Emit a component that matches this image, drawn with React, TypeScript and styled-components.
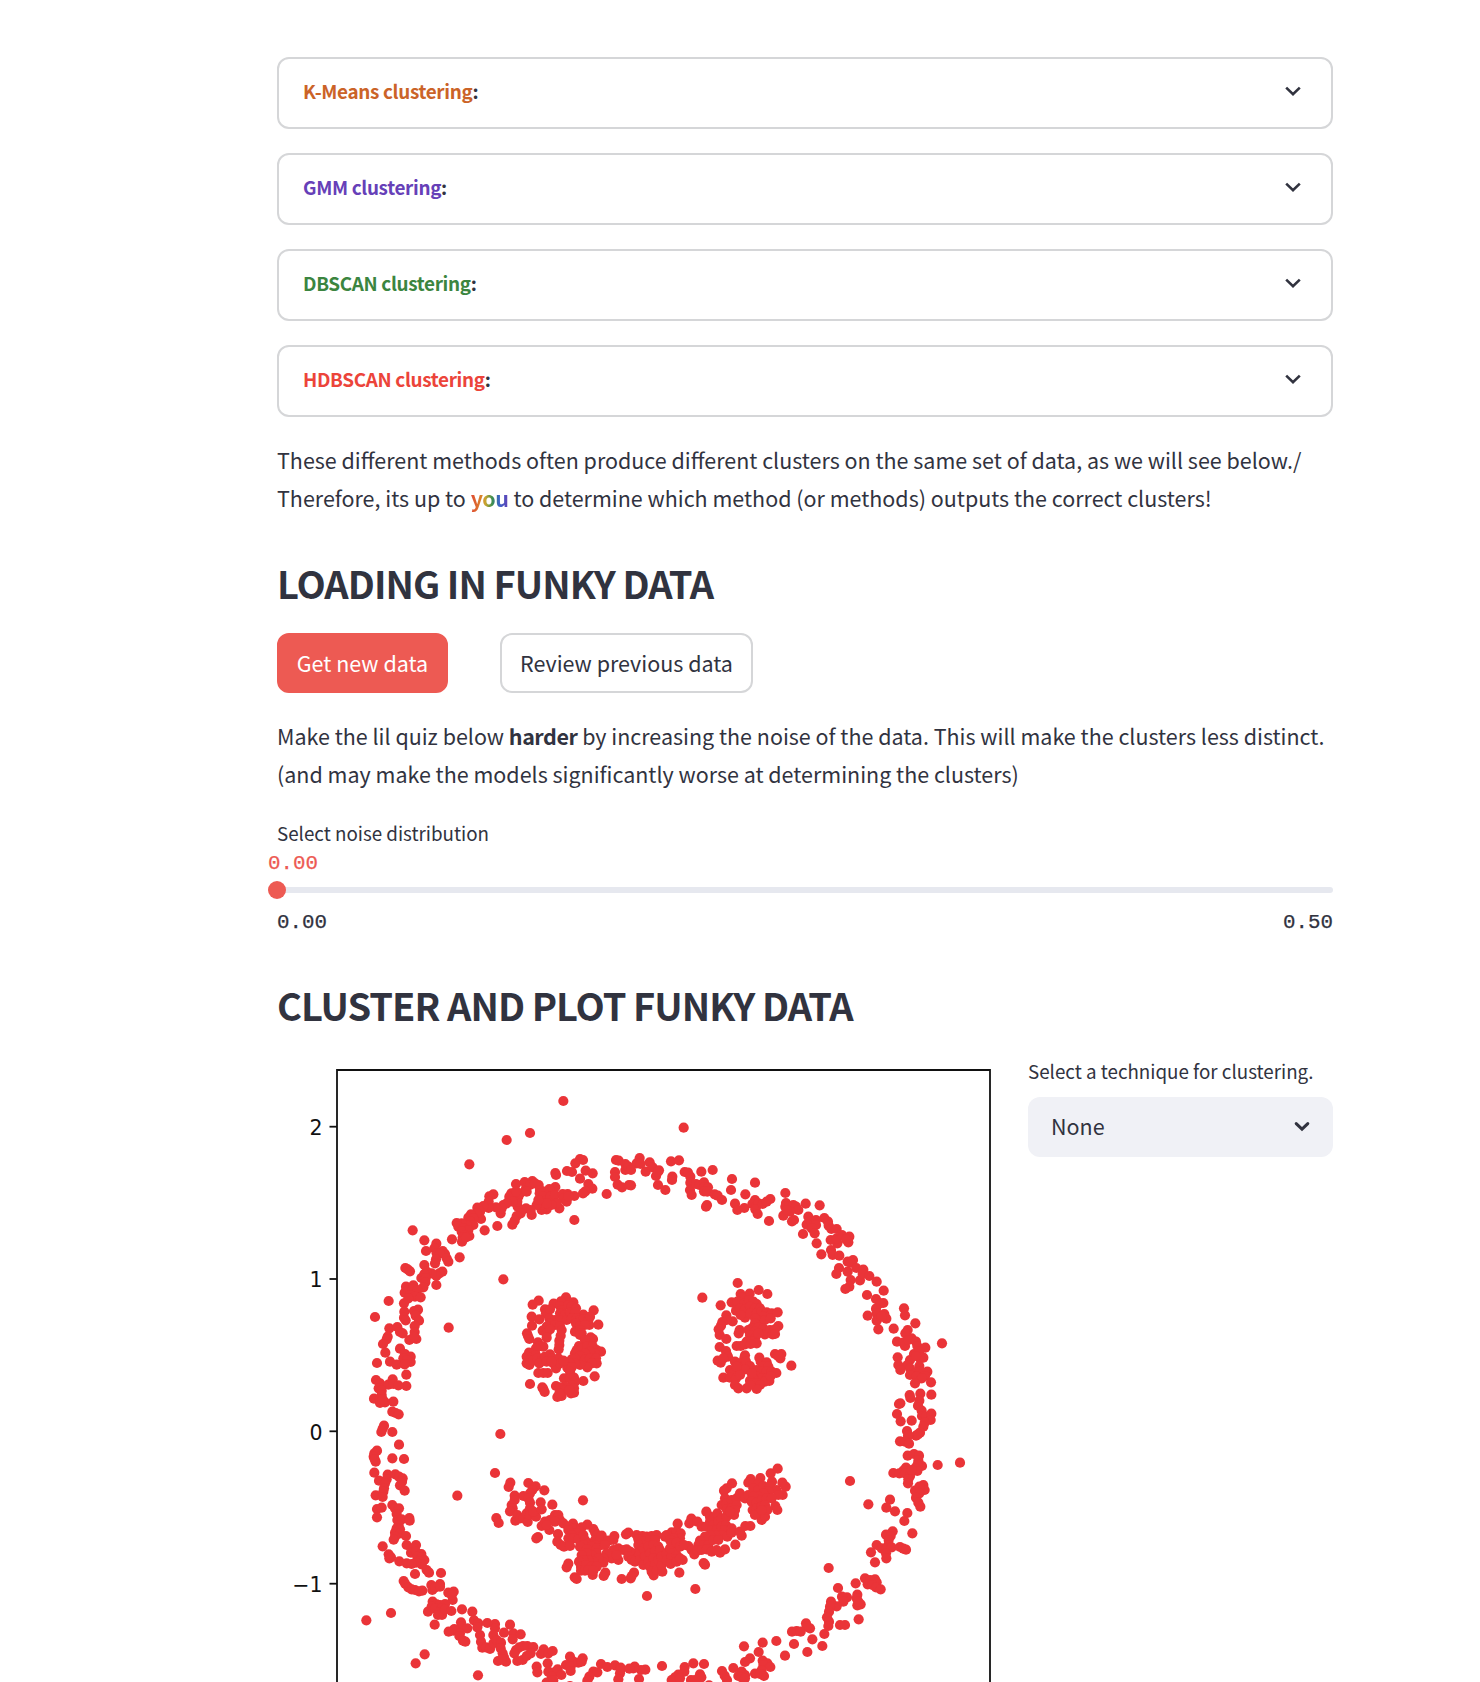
import React from "react";
import styled, { createGlobalStyle } from "styled-components";

const ink = "#31333f";
const accent = "#ed5a53";
const line = "#d5d6d8";
const sans = `"Noto Sans CJK SC", "Noto Sans", sans-serif`;
const mono = `"Liberation Mono", monospace`;

const GlobalStyle = createGlobalStyle`
  * { box-sizing: border-box; }
  body { margin: 0; background: #fff; color: ${ink}; font-family: ${sans}; }
`;

const Page = styled.main`
  height: 1682px;
  overflow: hidden;
  padding: 57px 147px 0 277px;
  display: flex;
  flex-direction: column;
`;

const ExpanderList = styled.section`
  display: flex;
  flex-direction: column;
  gap: 24px;
`;

const Expander = styled.div`
  height: 72px;
  border: 2px solid ${line};
  border-radius: 12px;
  padding: 15px 30px 0 24px;
  display: flex;
  align-items: flex-start;
  justify-content: space-between;
`;

const ExpanderTitle = styled.span`
  font-size: 18.9px;
  line-height: 34px;
  font-weight: 700;
  letter-spacing: -0.34px;
`;

const Tint = styled.span<{ $color: string }>`
  color: ${(p) => p.$color};
`;

const ExpanderIcon = styled.svg`
  width: 16px;
  height: 34px;
`;

const Paragraph = styled.p<{ $top: number }>`
  margin: ${(p) => p.$top}px 0 0;
  font-size: 21.48px;
  line-height: 38.4px;
  white-space: nowrap;
`;

const Strong = styled.strong`
  letter-spacing: -0.45px;
`;

const Rainbow = styled(Strong)`
  background: linear-gradient(to right, #e04a32 0%, #d9822b 27%, #c9a52f 38%, #3b8f50 56%, #3b62c9 74%, #6640b5 100%);
  -webkit-background-clip: text;
  background-clip: text;
  color: transparent;
`;

const Heading = styled.h2<{ $top: number }>`
  margin: ${(p) => p.$top}px 0 0;
  font-size: 38px;
  line-height: 46px;
  font-weight: 700;
  letter-spacing: -0.98px;
  white-space: nowrap;
`;

const ButtonRow = styled.div`
  display: flex;
  gap: 52px;
  margin-top: 27px;
`;

const Button = styled.button<{ $primary?: boolean; $width: number }>`
  width: ${(p) => p.$width}px;
  height: 60px;
  padding: 0 0 1px;
  border-radius: 12px;
  border: 2px solid ${(p) => (p.$primary ? accent : line)};
  background: ${(p) => (p.$primary ? accent : "#fff")};
  color: ${(p) => (p.$primary ? "#fff" : ink)};
  font: 400 21.5px ${sans};
  white-space: nowrap;
`;

const Label = styled.label`
  font-size: 18.78px;
  line-height: 30px;
  white-space: nowrap;
`;

const SliderBlock = styled.div`
  margin-top: 24px;
  display: flex;
  flex-direction: column;
`;

const SliderValue = styled.span`
  margin: 4px 0 0 -9px;
  font: 20.8px/24px ${mono};
  color: ${accent};
  -webkit-text-stroke: 0.25px ${accent};
`;

const Track = styled.div`
  height: 6px;
  margin-top: 11px;
  border-radius: 3px;
  background: #e6e8ef;
  display: flex;
  align-items: center;
`;

const Thumb = styled.span`
  width: 18px;
  height: 18px;
  margin-left: -9px;
  border-radius: 50%;
  background: ${accent};
`;

const SliderTicks = styled.div`
  display: flex;
  justify-content: space-between;
  margin-top: 18px;
  margin-bottom: 1px;
  font: 20.8px/24px ${mono};
  -webkit-text-stroke: 0.25px ${ink};
`;

const Columns = styled.section`
  display: grid;
  grid-template-columns: 727px 305px;
  gap: 24px;
  margin-top: 22px;
`;

const Plot = styled.svg`
  display: block;
  width: 727px;
  height: 632px;
`;

const TickText = styled.text`
  font: 20.5px "DejaVu Sans", sans-serif;
  fill: #111;
  text-anchor: end;
`;

const Controls = styled.div`
  display: flex;
  flex-direction: column;
  padding-top: 6px;
`;

const Select = styled.div`
  height: 60px;
  margin-top: 11px;
  padding: 0 22px 2px 23px;
  border-radius: 12px;
  background: #f0f1f6;
  display: flex;
  align-items: center;
  justify-content: space-between;
  font-size: 21.5px;
`;

const expanders = [
  { name: "K-Means clustering", color: "#cb6328" },
  { name: "GMM clustering", color: "#6640b8" },
  { name: "DBSCAN clustering", color: "#3b8540" },
  { name: "HDBSCAN clustering", color: "#ec443a" },
];

type Cluster = { x: number; y: number; points: string };

/* Each cluster has its own origin inside the plot; samples are in thirds of a pixel. */
const clusters: Cluster[] = [
  {
    x: 3,
    y: 0,
    points: `850,153 750,249 680,270 568,343 883,510 398,541 670,688 506,833 326,753 285,801 291,939 980,432 539,622 433,571 516,568 614,541 652,528
    900,327 909,330 886,340 861,363 876,366 917,362 938,370 900,386 826,369 828,375 925,402 937,416 916,424 909,430 883,438 1008,330 1016,332 1036,342 1005,366 1005,381 1036,360 1045,350 1013,404 1026,412 1047,405
    826,411 808,417 776,405 757,393 734,396 708,402 738,415 750,405 765,400 780,420 792,425 779,430 790,440 800,450 812,440 825,435 848,432 863,432 850,445 860,455 865,440 838,475 830,460 815,465 800,478 785,480 785,465 770,465 800,460 775,450 755,495 752,480 738,475 725,480 713,470 722,490 710,498 704,512 697,524 694,430 688,440 700,445 715,440 712,455 698,455 720,430 708,425 740,425 670,465 680,460 662,490 665,475 648,472 640,433 628,439 626,455 626,474 610,468 592,473 600,485 603,507 590,490 573,493 565,503 580,505 572,515 580,525 560,525 545,520 530,519 535,530 550,535 565,540 545,545 555,555 568,558 546,575 548,563 558,562
    469,581 463,595 438,603 488,603 495,612 470,610 480,610 468,628 465,640 500,625 505,635 433,645 376,654 383,658 390,664 487,665 478,670 469,678 455,670 440,665 433,672 424,684 437,685 436,697 430,712 469,705 378,710 374,728 385,720 400,706 398,718 412,720 390,735 405,740 422,742 372,760 385,745 414,779 402,783 373,785 372,803 377,811 407,797 417,812 404,828 404,846 409,867 388,870 402,860 328,835 352,831 360,846 368,850 323,860 320,868 309,882 316,908 360,896 375,912 392,920 392,936 370,925 380,930 330,935 350,944 374,943`,
  },
  {
    x: 353,
    y: 0,
    points: `161,233 29,324 20,340 32,342 3,360 3,406 59,337 47,365 68,352 87,361 78,378 84,365 84,405 106,420 123,334 147,331 127,380 126,390 164,366 174,368 181,380 181,398 180,420 185,435 198,402 208,405 222,397 222,412 234,412 222,424 232,425 214,365 248,360 231,465 228,470 254,433 263,437 276,450 306,387 303,420 346,433 375,398 315,461 322,480 343,474 375,450 367,462 378,470 385,460 376,478 383,492 398,462 410,455 421,447 417,513
    466,429 527,461 569,466 468,459 466,470 478,470 490,465 498,470 505,480 480,485 460,497 470,480 492,510 486,514 535,500 583,504 594,515 596,527 530,524 543,515 558,510 558,525 545,535 554,550 519,552 604,537 620,537 560,580 574,613 602,570 622,580 620,565 636,555 658,560 655,577 648,568 603,600 608,615 628,617 669,630 653,635 662,638 627,654 619,672 653,665 662,690 658,710 646,717 679,654 700,659 690,691 698,672 718,678 740,695 761,722 711,735 738,747 760,759 750,760 738,776 713,797 740,790 763,792 740,812 769,806 755,800 745,838 791,836 822,775 825,796 856,820 833,840 826,850 845,865 801,875 820,878 825,888 835,870 858,875 862,888 886,893 936,880 803,922 805,945 852,912 880,923 868,905 870,925 840,930 832,945 858,918 868,948 840,955`,
  },
  {
    x: 3,
    y: 320,
    points: `379,14 379,48 288,30 338,28 300,40 325,44 340,42 355,46 296,55 305,62 305,75 282,86 300,88 315,97 300,99 308,88 340,95 337,125 347,129 356,133 312,167 304,186 308,176 337,186 357,224 291,242 283,250 281,260 287,275 284,268 337,265 372,267 283,308 323,314 346,313 357,320 368,325 297,332 320,328 315,340 312,355 310,365 366,335 360,346 374,362 287,376 308,381 291,417 305,413 291,442 337,405 345,415 357,415 350,432 352,450 365,448 388,444 389,452 356,465 350,475 360,478 345,488 360,490 345,500 341,509 378,498 380,525 408,525 400,535 393,548 408,545 424,552 412,560 425,562 433,570 418,575 425,583 408,578 308,529 326,553 328,565 333,562 358,574 380,580 395,582 405,612 440,600 447,608 483,609
    371,633 376,642 385,652 395,658 405,660 417,664 427,662 454,645 457,660 480,642 466,652 480,650 505,668 521,665 518,690 515,675 458,695 470,703 455,710 444,725 480,705 495,702 465,715 485,715 478,728 486,735 474,735 495,718 514,723 464,764 546,718 577,725 582,751 543,757 545,770 562,775 523,777 520,782 506,785 540,790 538,798 549,812 556,815 595,760 592,772 622,759 645,762 600,795 645,775 640,795 690,764 672,788 700,790 722,793 698,808 603,815 607,833 618,832 630,837 640,820 650,810 663,818 662,835 668,850 672,862 654,873 678,875 665,868 729,828 718,832 742,828 760,831 708,840 703,850 712,873 728,870 740,858 752,850 791,838 783,852 805,850 818,843 803,880 770,890 772,907 805,905 820,908 833,898 844,915 815,920 800,938 820,930 870,860 880,875 858,885 872,890 872,903 895,878 908,865 905,875 963,882 982,891 1005,886 1022,893 1020,910 1022,898 940,905 952,907 928,920 922,932 1015,928 870,948
    259,751 333,729 434,853 407,880 594,916 532,377 661,192`,
  },
  {
    x: 353,
    y: 320,
    points: `892,5 811,0 855,10 870,5 840,15 860,20 885,18 875,25 855,40 903,37 839,75 841,84 871,71 904,74 868,92 864,107 807,102 811,100 801,132 812,154 845,152 875,122 876,138 888,140 904,131 902,150 884,158 880,170 870,188 858,197 864,193 831,183 834,197 810,214 825,215 837,221 833,257 852,252 867,257 865,272 876,288 862,285 855,295 862,303 828,293 820,302 790,309 808,310 825,310 840,318 835,328 834,340 845,300 923,285 990,278 660,333 715,403 880,345 884,360 868,350 855,362 868,370 858,383 865,398 871,410 780,389 769,413 795,424 832,429 823,453 788,484 847,490 768,494 782,498 776,510 775,525 740,525 723,547 755,535 770,535 785,532 810,531 820,536 828,539 768,550 769,565 735,577 596,594 624,654 677,640 705,625 720,630 735,628 740,637 713,643 727,645 738,652 752,658
    682,674 651,682 636,680 640,695 620,709 603,695 600,710 597,725 591,742 597,755 595,768 680,685 682,706 692,703 685,695 686,748 630,765 645,765 583,792 577,828 528,760 540,775 530,770 486,785 500,783 512,785 547,808 532,846 492,822 465,857 439,813 398,818 342,829 386,846 360,865 345,876 398,872 412,880 400,885 421,891 395,900 375,911 390,912 402,918 310,894 335,905 345,915 325,918 335,922 345,925 276,903 284,917 291,930 222,882 190,880 164,891 163,905 145,914 135,922 125,930 150,925 210,913 214,922 183,930 195,930 96,888 46,899 33,900 14,890 27,927 10,895 -2,896 237,946`,
  },
  {
    x: 223,
    y: 220,
    points: `198,82 220,97 183,94 161,101 116,92 98,104 281,121 295,164 250,134 135,118 138,130 150,118 180,108 185,120 205,105 215,110 228,115 180,130 195,135 210,128 225,128 95,140 118,148 148,145 165,150 180,150 200,150 215,145 230,145 240,150 250,148 265,150 270,140 268,165 96,167 150,160 140,170 165,165 128,182 180,168 140,190 150,178 228,160 240,168 255,165 225,185 240,180 245,190 240,195 81,190 84,198 88,207 185,180 182,197 178,212 178,225 176,238 140,203 114,217 118,228 130,230 108,235 272,202 279,207 255,210 237,228 230,240 245,235 262,230 278,228 290,240 303,245 285,250 270,245 255,250 225,250 240,258 225,265 215,268 255,268 270,265 288,265 290,280 275,280 262,292 240,285 225,280 210,280 202,293 215,292 210,305 87,248 80,260 95,262 108,255 80,280 88,285 100,272 112,265 125,270 118,280 135,260 150,253 155,265 140,275 160,280 175,265 168,295 180,280 190,272 155,275 115,309 130,309 143,309 284,319 250,333 90,342 127,352 130,357 134,366 192,325 210,325 222,323 225,335 215,345 195,350 168,348 180,352 222,355 222,368 213,370 195,360 185,378 172,381 178,370 208,360`,
  },
  {
    x: 223,
    y: 220,
    points: `607,83 713,39 776,60 802,72 749,71 722,72 725,83 662,106 695,97 712,95 733,100 747,90 770,102 760,95 708,122 720,115 735,118 750,110 765,115 780,115 735,143 750,130 722,135 770,130 785,125 800,127 790,140 780,150 765,145 795,150 815,130 812,145 833,127 679,136 698,154 680,150 667,156 663,167 656,178 659,195 679,207 719,180 716,190 765,160 755,175 745,180 775,172 790,175 765,185 750,195 765,205 755,215 740,215 770,220 795,193 775,190 810,180 835,168 825,178 818,193 825,192 710,228 722,228 735,223 752,222 659,231 678,243 680,252 684,260 653,272 662,278 670,265 825,252 844,252 841,265 834,258 874,287 735,256 733,264 705,275 720,280 738,275 750,288 778,263 782,275 800,277 790,290 805,290 690,300 670,323 700,310 720,300 735,298 710,290 690,323 708,325 720,315 770,300 785,305 800,305 770,320 785,325 800,325 815,305 829,309 808,333 795,335 705,345 715,355 740,355 750,332 760,325 770,340 780,345 770,357 750,345 755,310 812,318`,
  },
  {
    x: 203,
    y: 400,
    points: `45,69 91,98 86,111 309,151 49,204 56,219 145,99 193,121 167,109 157,120 150,130 104,137 104,150 130,138 145,145 150,158 95,165 98,175 90,184 106,212 112,195 120,205 130,205 143,216 140,190 150,175 150,195 168,200 160,185 182,157 185,178 217,164 174,261 169,265 185,228 195,215 210,210 225,195 235,195 240,210 225,215 208,240 200,225 250,220 234,252 279,221 265,230 280,235 265,240 322,224 305,232 340,237 345,247 300,245 290,250 275,255 265,265 280,265 295,268 310,255 315,270 325,280 310,285 232,275 242,285 252,290 270,288 350,257 365,257 345,270 360,272 365,285 345,285 335,290 350,295 300,290 320,298 403,258 400,270 385,272 375,285 400,300 415,295 430,300 400,305 395,325 415,330 380,310 410,315 350,310 335,315 320,310 305,315 370,325 370,338 355,325 340,335 325,330 310,330 297,335 303,350 318,345 335,350 350,350 303,362 315,362 338,375 325,360 340,362 265,341 260,352 284,382 290,387 376,368 371,378 425,387 452,385 462,368 455,378
    445,248 438,253 470,255 487,258 500,260 515,258 530,255 475,268 490,275 510,270 525,270 475,285 490,295 505,290 520,285 535,290 480,305 465,310 450,305 440,298 445,320 455,330 465,335 480,330 495,320 510,310 525,305 540,300 490,345 505,335 520,325 510,350 525,345 535,330 515,365 521,376 530,360 547,365 545,345 545,320 560,310 560,330 575,320 590,315 572,342 590,335 608,330 600,325 585,300 570,295 598,368 593,221 575,247 560,255 555,260 590,245 602,250 600,265 580,265 570,270 575,280 590,278 600,290 625,288 612,285 501,438 646,417
    634,206 628,220 652,215 665,230 679,185 690,200 700,205 712,190 690,215 680,230 700,225 715,215 725,205 740,200 695,240 710,240 725,230 738,225 735,240 755,235 725,255 742,260 755,248 705,255 690,255 690,270 675,260 660,272 655,285 672,285 685,285 700,270 715,270 635,300 643,313 652,302 665,300 680,298 695,305 720,308 735,298 710,300 671,339 675,344 766,284 785,257 780,245 796,228 811,228 756,100 740,115 732,122 735,145 725,165 740,160 755,150 770,145 780,130 740,178 755,175 770,165 765,180 762,195 750,185 795,145 805,135 812,87 805,98 820,100 841,84 835,100 820,115 835,120 850,108 872,70 893,56 876,95 870,108 890,120 907,98 917,110 908,135 895,135 865,125 850,130 835,140 820,140 815,155 830,158 845,150 860,145 875,145 818,180 830,175 845,170 855,165 835,190 850,190 845,210 855,200 862,180 886,168 892,180 825,195 845,180`,
  },
];

const dots = clusters.flatMap((c) =>
  c.points
    .trim()
    .split(/\s+/)
    .map((pair) => {
      const [px, py] = pair.split(",").map(Number);
      return { cx: c.x + px / 3, cy: c.y + py / 3 };
    })
);

const ticks = [
  { label: "2", y: 76.7 },
  { label: "1", y: 229 },
  { label: "0", y: 381.3 },
  { label: "−1", y: 533.7 },
];

function ScatterPlot() {
  return (
    <Plot viewBox="0 0 727 632">
      <g fill="#ea3438">
        {dots.map((d, i) => (
          <circle key={i} cx={d.cx} cy={d.cy} r={5.1} />
        ))}
      </g>
      <path d="M60 640V20H713V640" fill="none" stroke="#111" strokeWidth={1.8} />
      {ticks.map((t) => (
        <g key={t.label}>
          <path d={`M52.5 ${t.y}H60`} stroke="#111" strokeWidth={1.8} />
          <TickText x={45.5} y={t.y + 8.3}>
            {t.label}
          </TickText>
        </g>
      ))}
    </Plot>
  );
}

export default function App() {
  return (
    <>
      <GlobalStyle />
      <Page>
        <ExpanderList>
          {expanders.map((e) => (
            <Expander key={e.name}>
              <ExpanderTitle>
                <Tint $color={e.color}>{e.name}</Tint>:
              </ExpanderTitle>
              <ExpanderIcon viewBox="0 0 16 34">
                <path d="M1.2 13.6 8 20.2 14.8 13.6" fill="none" stroke={ink} strokeWidth={2.6} />
              </ExpanderIcon>
            </Expander>
          ))}
        </ExpanderList>
        <Paragraph $top={24}>
          These different methods often produce different clusters on the same set of data, as we will see below./
          <br />
          Therefore, its up to <Rainbow>you</Rainbow> to determine which method (or methods) outputs the correct clusters!
        </Paragraph>
        <Heading $top={42}>LOADING IN FUNKY DATA</Heading>
        <ButtonRow>
          <Button $primary $width={171}>
            Get new data
          </Button>
          <Button $width={253}>Review previous data</Button>
        </ButtonRow>
        <Paragraph $top={24}>
          Make the lil quiz below <Strong>harder</Strong> by increasing the noise of the data. This will make the clusters less distinct.
          <br />
          (and may make the models significantly worse at determining the clusters)
        </Paragraph>
        <SliderBlock>
          <Label>Select noise distribution</Label>
          <SliderValue>0.00</SliderValue>
          <Track>
            <Thumb />
          </Track>
          <SliderTicks>
            <span>0.00</span>
            <span>0.50</span>
          </SliderTicks>
        </SliderBlock>
        <Heading $top={46}>CLUSTER AND PLOT FUNKY DATA</Heading>
        <Columns>
          <ScatterPlot />
          <Controls>
            <Label>Select a technique for clustering.</Label>
            <Select>
              None
              <svg width="18" height="16" viewBox="0 0 18 16">
                <path d="M3.2 5.6 9 11.2 14.8 5.6" fill="none" stroke={ink} strokeWidth={3} strokeLinecap="round" />
              </svg>
            </Select>
          </Controls>
        </Columns>
      </Page>
    </>
  );
}
